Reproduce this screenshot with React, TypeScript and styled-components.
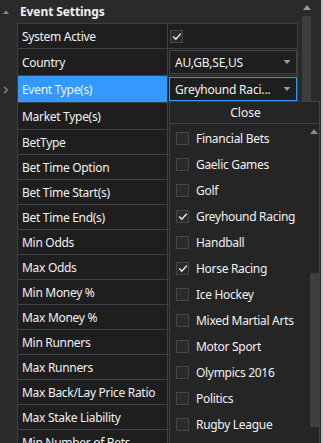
import React from "react";
import styled, { createGlobalStyle } from "styled-components";

const c = {
  frame: "#2a2a2b",
  cell: "#1e1e1e",
  popup: "#252526",
  line: "#3f3f46",
  text: "#f1f1f1",
  muted: "#9a9a9a",
  accent: "#3399ff",
  thumb: "#3e3e42",
  box: "#2b2b2e",
  boxLine: "#46464a",
};

const GlobalStyle = createGlobalStyle`
  html, body { margin: 0; padding: 0; background: ${c.frame}; }
  body {
    font-family: "Noto Sans", "Open Sans", sans-serif;
    font-size: 12px;
    color: ${c.text};
  }
`;

const Window = styled.div`
  position: relative;
  width: 323px;
  height: 443px;
  overflow: hidden;
  display: flex;
  background: ${c.frame};
`;

const Content = styled.div`
  width: 301px;
  flex-shrink: 0;
  display: flex;
  flex-direction: column;
`;

const Header = styled.div`
  height: 23px;
  flex-shrink: 0;
  display: flex;
  align-items: center;
`;

const HeaderToggle = styled.div`
  width: 20px;
  display: flex;
  justify-content: flex-start;
  padding-left: 3px;
  box-sizing: border-box;
`;

const HeaderTitle = styled.span`
  font-weight: 700;
  font-size: 12px;
  letter-spacing: -0.1px;
`;

const Body = styled.div`
  display: flex;
  flex-shrink: 0;
`;

const Gutter = styled.div`
  width: 17px;
  display: flex;
  flex-direction: column;
`;

const GutterSlot = styled.div<{ $h: number }>`
  height: ${(p) => p.$h}px;
  flex-shrink: 0;
  display: flex;
  align-items: center;
  padding-left: 3px;
`;

const Grid = styled.div`
  width: 281px;
  border-top: 1px solid ${c.line};
  border-left: 1px solid ${c.line};
  box-sizing: border-box;
  align-self: flex-start;
`;

const Row = styled.div<{ $tall?: boolean }>`
  display: grid;
  grid-template-columns: 150px 130px;
  height: ${(p) => (p.$tall ? 27 : 25)}px;
`;

const LabelCell = styled.div<{ $selected?: boolean }>`
  display: flex;
  align-items: center;
  padding-left: 4px;
  background: ${(p) => (p.$selected ? c.accent : c.cell)};
  border-right: 1px solid ${c.line};
  border-bottom: 1px solid ${c.line};
  white-space: nowrap;
  overflow: hidden;
  letter-spacing: -0.3px;
`;

const ValueCell = styled.div`
  display: flex;
  align-items: center;
  background: ${c.cell};
  border-right: 1px solid ${c.line};
  border-bottom: 1px solid ${c.line};
  padding-left: 1px;
`;

const Combo = styled.div<{ $focused?: boolean }>`
  width: 128px;
  height: 24px;
  box-sizing: border-box;
  border: 1px solid ${(p) => (p.$focused ? c.accent : c.boxLine)};
  background: ${c.cell};
  display: flex;
  align-items: center;
  justify-content: space-between;
  padding: 0 5px 0 5px;
  white-space: nowrap;
  letter-spacing: -0.2px;
`;

const Box = styled.span`
  width: 13px;
  height: 13px;
  box-sizing: border-box;
  border: 1px solid ${c.boxLine};
  background: ${c.box};
  display: inline-flex;
  align-items: center;
  justify-content: center;
  flex-shrink: 0;
`;

const CellBox = styled(Box)`
  margin-left: 1px;
`;

const ScrollColumn = styled.div`
  width: 11px;
  display: flex;
  flex-direction: column;
  align-items: center;
`;

const ScrollArrow = styled.div`
  height: 15px;
  flex-shrink: 0;
  display: flex;
  align-items: center;
  justify-content: center;
`;

const ScrollThumb = styled.div<{ $offset: number; $size: number }>`
  width: 9px;
  flex-shrink: 0;
  margin-top: ${(p) => p.$offset}px;
  height: ${(p) => p.$size}px;
  background: ${c.thumb};
`;

const Edge = styled.div`
  margin-left: auto;
  width: 2px;
  background: #c9c9c9;
`;

const Popup = styled.div`
  position: absolute;
  left: 169px;
  top: 101px;
  width: 151px;
  bottom: -2px;
  background: ${c.popup};
  border: 1px solid ${c.line};
  box-sizing: border-box;
  display: flex;
  flex-direction: column;
`;

const PopupHeader = styled.div`
  height: 22px;
  flex-shrink: 0;
  border-bottom: 1px solid ${c.line};
  box-sizing: border-box;
  display: flex;
  align-items: center;
  justify-content: center;
  padding-left: 2px;
`;

const PopupBody = styled.div`
  flex: 1;
  display: flex;
  overflow: hidden;
`;

const ItemList = styled.div`
  flex: 1;
  padding-top: 1px;
`;

const Item = styled.div`
  height: 26px;
  display: flex;
  align-items: center;
  gap: 7px;
  padding-left: 6px;
  white-space: nowrap;
  letter-spacing: -0.3px;
`;

const PopupScroll = styled.div`
  width: 10px;
  display: flex;
  flex-direction: column;
  align-items: center;
`;

const Triangle = ({ dir, color = c.muted }: { dir: "up" | "down"; color?: string }) => (
  <svg width="8" height="5" viewBox="0 0 8 5">
    {dir === "up" ? (
      <path d="M0 5 L4 0 L8 5 Z" fill={color} />
    ) : (
      <path d="M0.5 0 L7.5 0 L4 4 Z" fill={color} />
    )}
  </svg>
);

const SmallUp = () => (
  <svg width="6" height="4" viewBox="0 0 6 4">
    <path d="M0 4 L3 0.5 L6 4 Z" fill="#8a8a8a" />
  </svg>
);

const Chevron = () => (
  <svg width="6" height="8" viewBox="0 0 6 8">
    <path d="M1 1 L4.5 4 L1 7" stroke="#8a8a8a" strokeWidth="1.2" fill="none" />
  </svg>
);

const Check = () => (
  <svg width="10" height="9" viewBox="0 0 10 9">
    <path d="M1.2 4.6 L3.8 7.2 L8.8 1.6" stroke="#f1f1f1" strokeWidth="1.4" fill="none" />
  </svg>
);

type Field = {
  label: string;
  kind?: "check" | "combo";
  value?: string;
  selected?: boolean;
};

const fields: Field[] = [
  { label: "System Active", kind: "check" },
  { label: "Country", kind: "combo", value: "AU,GB,SE,US" },
  { label: "Event Type(s)", kind: "combo", value: "Greyhound Raci...", selected: true },
  { label: "Market Type(s)", kind: "combo", value: "" },
  { label: "BetType" },
  { label: "Bet Time Option" },
  { label: "Bet Time Start(s)" },
  { label: "Bet Time End(s)" },
  { label: "Min Odds" },
  { label: "Max Odds" },
  { label: "Min Money %" },
  { label: "Max Money %" },
  { label: "Min Runners" },
  { label: "Max Runners" },
  { label: "Max Back/Lay Price Ratio" },
  { label: "Max Stake Liability" },
  { label: "Min Number of Bets" },
];

const eventTypes: { name: string; checked?: boolean }[] = [
  { name: "Financial Bets" },
  { name: "Gaelic Games" },
  { name: "Golf" },
  { name: "Greyhound Racing", checked: true },
  { name: "Handball" },
  { name: "Horse Racing", checked: true },
  { name: "Ice Hockey" },
  { name: "Mixed Martial Arts" },
  { name: "Motor Sport" },
  { name: "Olympics 2016" },
  { name: "Politics" },
  { name: "Rugby League" },
  { name: "Rugby Union" },
];

const rowHeight = (f: Field) => (f.kind === "combo" ? 27 : 25);

export default function App() {
  return (
    <>
      <GlobalStyle />
      <Window>
        <Content>
          <Header>
            <HeaderToggle>
              <SmallUp />
            </HeaderToggle>
            <HeaderTitle>Event Settings</HeaderTitle>
          </Header>
          <Body>
            <Gutter>
              <GutterSlot $h={1} />
              {fields.map((f) => (
                <GutterSlot key={f.label} $h={rowHeight(f)}>
                  {f.selected && <Chevron />}
                </GutterSlot>
              ))}
            </Gutter>
            <Grid>
              {fields.map((f) => (
                <Row key={f.label} $tall={f.kind === "combo"}>
                  <LabelCell $selected={f.selected}>{f.label}</LabelCell>
                  <ValueCell>
                    {f.kind === "check" && (
                      <CellBox>
                        <Check />
                      </CellBox>
                    )}
                    {f.kind === "combo" && (
                      <Combo $focused={f.selected}>
                        <span>{f.value}</span>
                        <Triangle dir="down" />
                      </Combo>
                    )}
                  </ValueCell>
                </Row>
              ))}
            </Grid>
          </Body>
        </Content>
        <ScrollColumn>
          <ScrollArrow>
            <Triangle dir="up" />
          </ScrollArrow>
          <ScrollThumb $offset={1} $size={420} />
        </ScrollColumn>
        <Edge />

        <Popup>
          <PopupHeader>Close</PopupHeader>
          <PopupBody>
            <ItemList>
              {eventTypes.map((e) => (
                <Item key={e.name}>
                  <Box>{e.checked && <Check />}</Box>
                  <span>{e.name}</span>
                </Item>
              ))}
            </ItemList>
            <PopupScroll>
              <ScrollArrow>
                <Triangle dir="up" color="#8a8a8a" />
              </ScrollArrow>
              <ScrollThumb $offset={134} $size={154} />
            </PopupScroll>
          </PopupBody>
        </Popup>
      </Window>
    </>
  );
}
